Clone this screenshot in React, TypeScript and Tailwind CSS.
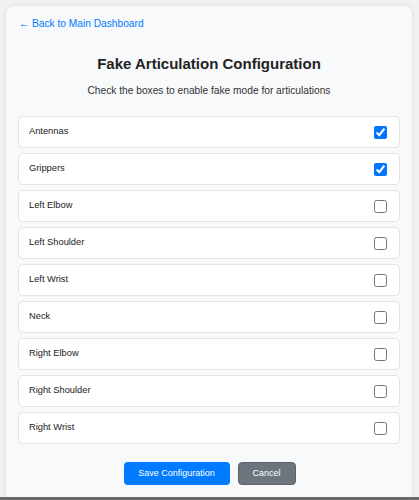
import React from "react";

const items: { name: string; checked: boolean }[] = [
  { name: "Antennas", checked: true },
  { name: "Grippers", checked: true },
  { name: "Left Elbow", checked: false },
  { name: "Left Shoulder", checked: false },
  { name: "Left Wrist", checked: false },
  { name: "Neck", checked: false },
  { name: "Right Elbow", checked: false },
  { name: "Right Shoulder", checked: false },
  { name: "Right Wrist", checked: false },
];

export default function App() {
  return (
    <div
      className="h-[500px] w-[419px] overflow-hidden bg-[#f1f1f1] flex flex-col"
      style={{ fontFamily: '"Liberation Sans", Arial, sans-serif' }}
    >
      <div className="flex-1 overflow-hidden pt-[5px] px-[5px] pr-[6px]">
        <div className="h-[495px] bg-[#f8f9fa] rounded-t-[8px] border border-[#e6e6e6] px-[12px] pt-[11px] shadow-[0_0_4px_rgba(0,0,0,0.06)]">
          <a className="block ml-[1px] text-[10.2px] leading-[14px] text-[#007bff]">
            ← Back to Main Dashboard
          </a>
          <h1 className="mt-[24px] text-center text-[15px] leading-[18px] font-bold text-[#222]">
            Fake Articulation Configuration
          </h1>
          <p className="mt-[11px] text-center text-[10.2px] leading-[13px] text-[#333]">
            Check the boxes to enable fake mode for articulations
          </p>
          <div className="mt-[19px] flex flex-col gap-[5px]">
            {items.map((it) => (
              <label
                key={it.name}
                className="h-[32px] flex items-center justify-between bg-white border border-[#e3e3e3] rounded-[5px] pl-[10px] pr-[12px]"
              >
                <span className="text-[9.3px] text-[#222]">{it.name}</span>
                <input
                  type="checkbox"
                  defaultChecked={it.checked}
                  className="w-[13px] h-[13px] m-0"
                />
              </label>
            ))}
          </div>
          <div className="mt-[18px] flex justify-center gap-[8px] pl-[1px]">
            <button className="w-[106px] h-[23px] rounded-[4px] bg-[#007bff] text-white text-[9px]">
              Save Configuration
            </button>
            <button className="w-[58px] h-[23px] rounded-[4px] bg-[#6c757d] border border-[#5a6268] text-white text-[9px]">
              Cancel
            </button>
          </div>
        </div>
      </div>
      <div className="h-[3px] bg-[#6a6a6a] shrink-0" />
    </div>
  );
}
